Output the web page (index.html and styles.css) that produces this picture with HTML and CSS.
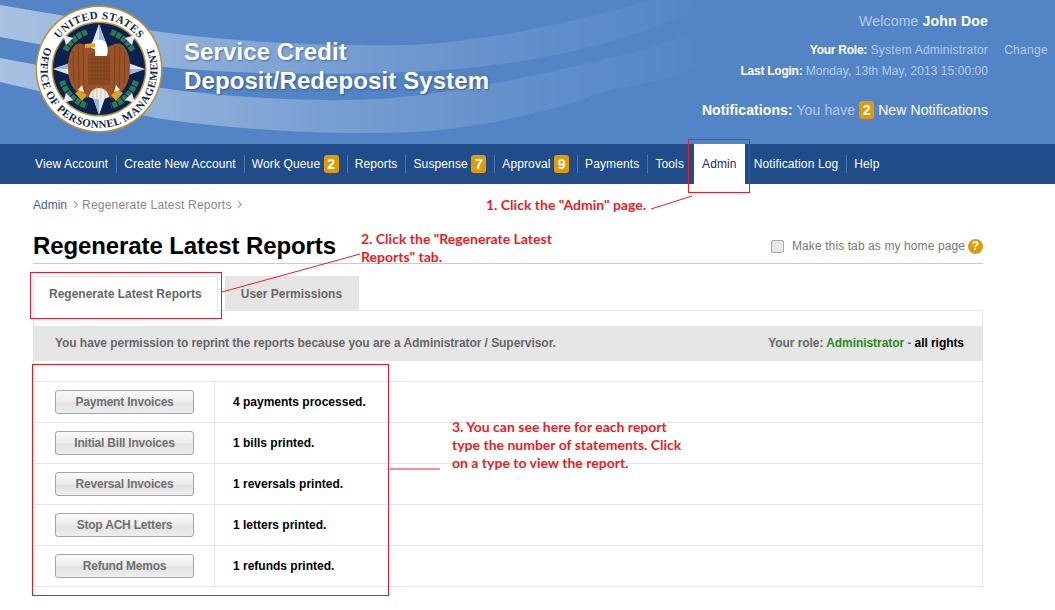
FILE: index.html
```html
<!DOCTYPE html>
<html lang="en">
<head>
    <meta charset="UTF-8">
    <title>Regenerate Latest Reports</title>
    <link rel="stylesheet" href="styles.css">
</head>
<body>
    <header class="site-header">
        <svg class="waves" viewBox="0 0 1055 144" width="1055" height="144" aria-hidden="true">
            <defs>
                <linearGradient id="fade" gradientUnits="userSpaceOnUse" x1="0" y1="0" x2="720" y2="0">
                    <stop offset="0" stop-color="#fff" stop-opacity="0.5"/>
                    <stop offset="0.2" stop-color="#fff" stop-opacity="0.38"/>
                    <stop offset="0.4" stop-color="#fff" stop-opacity="0.25"/>
                    <stop offset="0.7" stop-color="#fff" stop-opacity="0.1"/>
                    <stop offset="0.86" stop-color="#fff" stop-opacity="0.05"/>
                    <stop offset="1" stop-color="#fff" stop-opacity="0"/>
                </linearGradient>
            </defs>
            <path fill="url(#fade)" d="M0 5 L155 31 C230 42 320 46 410 45 C480 42 570 24 650 0 L715 0 C650 35 580 52 510 63 C470 68 440 71 410 72 C340 75 230 75 155 66 L0 37 Z"/>
            <path fill="url(#fade)" d="M0 58 L155 87 C220 97 300 101 350 100 C410 100 500 85 610 58 C640 52 660 46 720 22 L720 60 C680 78 650 82 610 90 C540 115 470 130 410 132 C350 135 250 132 155 118 L0 82 Z"/>
        </svg>
        <svg class="seal" viewBox="0 0 128 128" width="128" height="128" role="img" aria-label="Office of Personnel Management seal">
            <defs>
                <path id="arc-top" d="M24 34 A50 50 0 0 1 104 34"/>
                <path id="arc-bottom" d="M10 42 A58.5 58.5 0 1 0 118 42"/>
            </defs>
            <circle cx="64" cy="64" r="63.5" fill="#b8923a"/>
            <circle cx="64" cy="64" r="62" fill="#fff"/>
            <circle cx="64" cy="64" r="47.5" fill="#b8923a"/>
            <circle cx="64" cy="64" r="46" fill="#0c2150"/>
            <text class="seal-text"><textPath href="#arc-top" startOffset="50%" text-anchor="middle">UNITED STATES</textPath></text>
            <text class="seal-text"><textPath href="#arc-bottom" startOffset="50%" text-anchor="middle">OFFICE OF PERSONNEL MANAGEMENT</textPath></text>
            <!-- laurel -->
            <g fill="none" stroke="#2c7a4f" stroke-width="6" stroke-dasharray="5 1">
                <path d="M52 27 A39 39 0 0 0 30 46"/>
                <path d="M76 27 A39 39 0 0 1 98 46"/>
                <path d="M27 76 A39 39 0 0 0 52 101"/>
                <path d="M101 76 A39 39 0 0 1 76 101"/>
            </g>
            <!-- star -->
            <path fill="#dfe8f2" d="M64 19 L76 52 L110 64 L76 76 L64 110 L52 76 L18 64 L52 52 Z"/>
            <path fill="#9db7d4" d="M64 19 L76 52 L64 64 Z M110 64 L76 76 L64 64 Z M64 110 L52 76 L64 64 Z M18 64 L52 52 L64 64 Z"/>
            <path fill="#e6edf5" d="M28 30 L38 33 L31 40 Z M100 30 L97 40 L90 33 Z M28 98 L31 88 L38 95 Z M100 98 L90 95 L97 88 Z"/>
            <!-- eagle -->
            <path fill="#9a5228" d="M64 46 C55 43 48 37 42 39 C36 42 33 52 33 62 C33 72 35 80 41 86 L50 93 L64 90 L78 93 L87 86 C93 80 95 72 95 62 C95 52 92 42 86 39 C80 37 73 43 64 46 Z"/>
            <g stroke="#6b3513" stroke-width="0.6" fill="none">
                <path d="M38 46 L39 78 M43 41 L44 83 M48 40 L49 86 M90 46 L89 78 M85 41 L84 83 M80 40 L79 86"/>
            </g>
            <path fill="#8a4820" d="M53 50 C57 46 71 46 75 50 L75 80 L53 80 Z"/>
            <path stroke="#6b3513" stroke-width="1" stroke-dasharray="1.5 1.5" fill="none" d="M56 54 L72 54 M56 58 L72 58 M56 62 L72 62 M56 66 L72 66 M56 70 L72 70 M56 74 L72 74"/>
            <path fill="#f4efe8" d="M54 92 C56 80 72 80 74 92 C69 95 59 95 54 92 Z"/>
            <path stroke="#a89a8c" stroke-width="0.6" fill="none" d="M58 84 L58 93 M62 82 L62 94 M66 82 L66 94 M70 84 L70 93"/>
            <path fill="#fff" d="M56 39 C58 34 69 33 71 38 C73 42 73 46 72 51 L60 51 C60 47 61 45 59 42 Z"/>
            <path fill="#e3a81e" d="M60 38 L50 39 L50 43 L60 42 Z"/>
            <path fill="#d9a024" d="M47 96 L40 88 L45 85 L52 90 Z M81 96 L88 88 L83 85 L76 90 Z"/>
            <path fill="#f2efe6" d="M43 85 L47 80 L49 87 Z M85 85 L81 80 L79 87 Z"/>
        </svg>
        <div class="site-title">Service Credit<br>Deposit/Redeposit System</div>
        <div class="user-info">
            <div class="welcome">Welcome <b>John Doe</b></div>
            <div class="role-row"><span><b>Your Role:</b> System Administrator</span><a class="change-link" href="#">Change</a></div>
            <div class="login-row"><b>Last Login:</b> Monday, 13th May, 2013 15:00:00</div>
            <div class="notify-row"><b>Notifications:</b> You have <span class="badge">2</span> <em>New Notifications</em></div>
        </div>
    </header>

    <nav class="main-nav">
        <ul>
            <li><a href="#">View Account</a></li>
            <li><a href="#">Create New Account</a></li>
            <li><a href="#">Work Queue <span class="badge">2</span></a></li>
            <li><a href="#">Reports</a></li>
            <li><a href="#">Suspense <span class="badge">7</span></a></li>
            <li><a href="#">Approval <span class="badge">9</span></a></li>
            <li><a href="#">Payments</a></li>
            <li><a class="no-sep" href="#">Tools</a></li>
            <li><a class="active" href="#">Admin</a></li>
            <li><a href="#">Notification Log</a></li>
            <li><a class="no-sep" href="#">Help</a></li>
        </ul>
    </nav>

    <main class="content">
        <div class="breadcrumb"><a href="#">Admin</a><i></i><span>Regenerate Latest Reports</span><i></i></div>

        <div class="page-head">
            <h1>Regenerate Latest Reports</h1>
            <label class="home-check"><span class="fake-box"></span>Make this tab as my home page<span class="help-icon">?</span></label>
        </div>

        <div class="tabs">
            <a class="tab tab-active" href="#">Regenerate Latest Reports</a>
            <a class="tab" href="#">User Permissions</a>
        </div>

        <section class="panel">
            <div class="perm-bar">
                <span>You have permission to reprint the reports because you are a Administrator / Supervisor.</span>
                <span>Your role: <span class="role-name">Administrator</span> - <span class="role-rights">all rights</span></span>
            </div>
            <div class="report-list">
                <div class="report-row"><div class="report-btn-cell"><button class="report-btn">Payment Invoices</button></div><div class="report-count">4 payments processed.</div></div>
                <div class="report-row"><div class="report-btn-cell"><button class="report-btn">Initial Bill Invoices</button></div><div class="report-count">1 bills printed.</div></div>
                <div class="report-row"><div class="report-btn-cell"><button class="report-btn">Reversal Invoices</button></div><div class="report-count">1 reversals printed.</div></div>
                <div class="report-row"><div class="report-btn-cell"><button class="report-btn">Stop ACH Letters</button></div><div class="report-count">1 letters printed.</div></div>
                <div class="report-row"><div class="report-btn-cell"><button class="report-btn">Refund Memos</button></div><div class="report-count">1 refunds printed.</div></div>
            </div>
        </section>
    </main>

    <!-- red help annotations drawn over the page -->
    <div class="note-box box-admin"></div>
    <div class="note-box box-tab"></div>
    <div class="note-box box-rows"></div>
    <svg class="note-lines" width="1055" height="610" aria-hidden="true">
        <path d="M651 209 L692 196 M222 292 L360 254 M390 469 L440 469" stroke="#ed1c24" stroke-width="1" fill="none"/>
    </svg>
    <p class="note note-1">1. Click the "Admin" page.</p>
    <p class="note note-2">2. Click the "Regenerate Latest<br>Reports" tab.</p>
    <p class="note note-3">3. You can see here for each report<br>type the number of statements. Click<br>on a type to view the report.</p>
</body>
</html>
```

FILE: styles.css
```css
html, body {
    margin: 0;
    padding: 0;
    height: 610px;
    overflow: hidden;
}
body {
    position: relative;
    background: #fff;
    color: #666;
    font-family: "Liberation Sans", Arial, sans-serif;
    font-size: 12px;
}
a {
    text-decoration: none;
    color: inherit;
}

/* header */
.site-header {
    position: relative;
    display: flex;
    height: 144px;
    background: #5384c6;
    overflow: hidden;
}
.waves {
    position: absolute;
    left: 0;
    top: 0;
}
.seal {
    position: relative;
    flex: none;
    margin: 5px 0 0 35px;
}
.seal-text {
    font-family: "Liberation Serif", serif;
    font-weight: bold;
    font-size: 11px;
    letter-spacing: 0.5px;
    fill: #14264f;
}
.site-title {
    position: relative;
    margin: 37px 0 0 21px;
    color: #fff;
    font-size: 24px;
    font-weight: bold;
    letter-spacing: 0.1px;
    line-height: 29px;
    text-shadow: 1px 1px 2px rgba(20, 50, 100, 0.5);
    white-space: nowrap;
}
.user-info {
    position: relative;
    margin-left: auto;
    padding: 13px 7px 0 0;
    text-align: right;
    color: #b4cbeb;
    white-space: nowrap;
}
.user-info b {
    color: #fff;
}
.welcome {
    padding-right: 60px;
    font-size: 14px;
    letter-spacing: 0.2px;
    line-height: 17px;
}
.role-row {
    display: flex;
    justify-content: flex-end;
    gap: 15px;
    margin-top: 13px;
    letter-spacing: 0.2px;
    line-height: 15px;
}
.role-row b,
.login-row b {
    letter-spacing: -0.25px;
}
.change-link {
    width: 45px;
    letter-spacing: 0.3px;
}
.login-row {
    margin-top: 6px;
    padding-right: 60px;
    letter-spacing: 0.06px;
    line-height: 15px;
}
.notify-row {
    margin-top: 22px;
    padding-right: 60px;
    font-size: 14px;
    letter-spacing: 0.1px;
    line-height: 18px;
}
.notify-row em {
    font-style: normal;
    color: #fff;
}
.badge {
    display: inline-block;
    width: 15px;
    height: 18px;
    border-radius: 3px;
    background: #e09b06;
    color: #fff;
    font-size: 14px;
    font-weight: bold;
    letter-spacing: 0;
    line-height: 18px;
    text-align: center;
    vertical-align: top;
}

/* main menu */
.main-nav {
    height: 40px;
    background: #204c8a;
}
.main-nav ul {
    display: flex;
    align-items: center;
    height: 40px;
    margin: 0;
    padding: 0 0 0 28px;
    list-style: none;
}
.main-nav a {
    display: block;
    padding: 0 8px 0 7px;
    border-right: 1px solid #4d72a6;
    color: #fff;
    letter-spacing: 0.12px;
    line-height: 18px;
    white-space: nowrap;
}
.main-nav a.no-sep {
    border-right: 0;
    padding-right: 10px;
}
.main-nav a.active {
    height: 40px;
    margin-right: 2px;
    padding: 0 8px;
    border-right: 0;
    background: #fff;
    color: #1c2f55;
    line-height: 40px;
}

/* page */
.content {
    padding: 0 72px 0 33px;
}
.breadcrumb {
    display: flex;
    align-items: center;
    gap: 5.5px;
    height: 15px;
    margin-top: 13px;
    color: #888;
}
.breadcrumb a {
    color: #3f6296;
}
.breadcrumb span {
    letter-spacing: 0.22px;
}
.breadcrumb i {
    width: 4px;
    height: 4px;
    margin-left: -1px;
    border-top: 1px solid #999;
    border-right: 1px solid #999;
    transform: rotate(45deg);
}
.page-head {
    display: flex;
    align-items: center;
    justify-content: space-between;
    height: 34px;
    margin-top: 16px;
    padding-bottom: 1px;
    border-bottom: 1px solid #ccc;
}
h1 {
    margin: 2px 0 0;
    color: #000;
    font-size: 24px;
    letter-spacing: -0.1px;
    line-height: 32px;
}
.home-check {
    display: flex;
    align-items: center;
    padding-top: 2px;
    color: #777;
    letter-spacing: 0.1px;
}
.fake-box {
    width: 11px;
    height: 11px;
    margin-right: 8px;
    border: 1px solid #aaa;
    border-radius: 2px;
    background: #e8e8e8;
}
.help-icon {
    width: 15px;
    height: 15px;
    margin-left: 3px;
    border-radius: 50%;
    background: #e09b06;
    color: #fff;
    font-weight: bold;
    line-height: 15px;
    text-align: center;
}

/* tabs */
.tabs {
    display: flex;
    gap: 7px;
    margin-top: 12px;
    height: 34px;
}
.tab {
    box-sizing: border-box;
    height: 34px;
    padding: 0 17px 0 16px;
    background: #e6e6e6;
    font-weight: bold;
    line-height: 36px;
}
.tab-active {
    height: 35px;
    padding: 0 15px;
    position: relative;
    z-index: 1;
    background: #fff;
    border: 1px solid #e6e6e6;
    border-bottom: 0;
    line-height: 34px;
}
.panel {
    box-sizing: border-box;
    height: 277px;
    border: 1px solid #e6e6e6;
}
.perm-bar {
    display: flex;
    justify-content: space-between;
    height: 35px;
    margin-top: 15px;
    padding: 0 18px 0 21px;
    background: #e6e6e6;
    font-weight: bold;
    letter-spacing: -0.06px;
    line-height: 35px;
}
.role-name {
    color: #2a8a1e;
}
.role-rights {
    color: #000;
}
.report-list {
    margin-top: 20px;
    border-top: 1px solid #e6e6e6;
}
.report-row {
    display: flex;
    height: 40px;
    border-bottom: 1px solid #e6e6e6;
}
.report-row:last-child {
    border-bottom: 0;
}
.report-btn-cell {
    box-sizing: border-box;
    width: 181px;
    padding: 8px 0 0 21px;
    border-right: 1px solid #e6e6e6;
}
.report-btn {
    display: block;
    width: 139px;
    height: 24px;
    padding: 0;
    border: 1px solid #a5a5a5;
    border-radius: 3px;
    background: linear-gradient(#f9f9f9, #ececec 50%, #e2e2e2 55%, #eee);
    color: #707070;
    font-family: inherit;
    font-size: 12px;
    font-weight: bold;
    letter-spacing: -0.2px;
}
.report-count {
    padding-left: 18px;
    color: #000;
    font-weight: bold;
    line-height: 40px;
}

/* annotations */
.note-box {
    position: absolute;
    box-sizing: border-box;
    border: 1px solid #ed1c24;
}
.box-admin {
    left: 688px;
    top: 139px;
    width: 62px;
    height: 54px;
}
.box-tab {
    left: 30px;
    top: 272px;
    width: 192px;
    height: 47px;
}
.box-rows {
    left: 32px;
    top: 364px;
    width: 357px;
    height: 232px;
}
.note-lines {
    position: absolute;
    left: 0;
    top: 0;
}
.note {
    position: absolute;
    margin: 0;
    color: #ed1c24;
    font-family: Lato, "Open Sans", sans-serif;
    font-size: 14px;
    font-weight: bold;
    line-height: 18px;
    white-space: nowrap;
}
.note-1 {
    left: 486px;
    top: 196px;
}
.note-2 {
    left: 361px;
    top: 230px;
}
.note-3 {
    left: 452px;
    top: 418px;
}
```
